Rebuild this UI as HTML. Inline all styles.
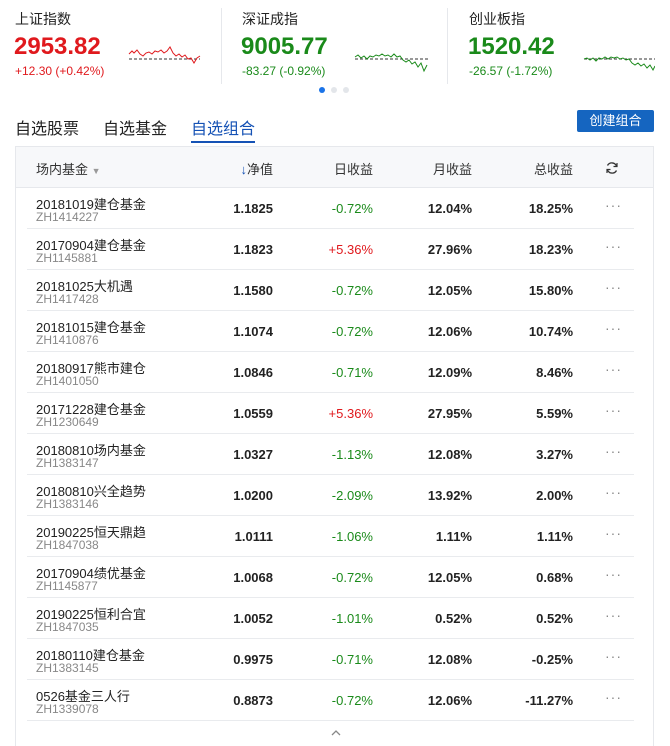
<!DOCTYPE html>
<html><head><meta charset="utf-8"><style>
*{margin:0;padding:0;box-sizing:border-box}
body{width:670px;height:734px;overflow:hidden;background:#fff;font-family:"Liberation Sans","Noto Sans CJK SC",sans-serif;color:#222;position:relative}
.a{position:absolute;white-space:nowrap}
.lbl{font-size:14px;color:#222}
.big{font-size:24px;font-weight:bold}
.chg{font-size:12px}
.red{color:#e0191d}.grn{color:#1a8a1a}
.sep{position:absolute;top:8px;width:1px;height:76px;background:#e6e8ec}
.tab{font-size:16px;top:115px}
.tbl{position:absolute;left:15px;top:146px;width:639px;height:600px;border:1px solid #e6e8ec;border-bottom:none}
.hd{position:absolute;left:0;top:0;width:637px;height:41px;background:#f7f8fa;border-bottom:1px solid #e6e8ec}
.h{position:absolute;top:12px;font-size:13px;color:#333}
.hr{position:absolute;top:12px;font-size:13px;color:#333;width:90px;text-align:right}
.row{position:absolute;left:11px;width:607px;height:41px;border-bottom:1px solid #e9ebee}
.nm{position:absolute;left:9px;top:6px;font-size:13px;color:#222}
.cd{position:absolute;left:9px;top:22px;font-size:12px;color:#888}
.n{position:absolute;top:13px;font-size:13px;font-weight:bold;text-align:right;width:90px}
.d{position:absolute;left:578px;top:9px;font-size:14px;color:#888;letter-spacing:1px}
</style></head><body>
<div class="a lbl" style="left:15px;top:9px">上证指数</div>
<div class="a big red" style="left:14px;top:33px">2953.82</div>
<div class="a chg red" style="left:15px;top:64px">+12.30 (+0.42%)</div>
<svg class="a" style="left:128px;top:40px" width="75" height="25"><line x1="1" y1="19" x2="72" y2="19" stroke="#333" stroke-dasharray="3,2" stroke-width="1"/><polyline fill="none" stroke="#e0191d" stroke-width="1" points="1,14 4,11 6,13 9,10 12,14 15,16 18,13 21,12 24,14 27,11 30,12 33,10 36,13 39,11 42,7 45,13 48,16 51,14 54,17 57,15 60,19 63,18 66,23 69,18 72,16"/></svg>
<div class="sep" style="left:221px"></div>
<div class="a lbl" style="left:242px;top:9px">深证成指</div>
<div class="a big grn" style="left:241px;top:33px">9005.77</div>
<div class="a chg grn" style="left:242px;top:64px">-83.27 (-0.92%)</div>
<svg class="a" style="left:354px;top:48px" width="76" height="28"><line x1="1" y1="11" x2="74" y2="11" stroke="#333" stroke-dasharray="3,2"/><polyline fill="none" stroke="#1a8a1a" stroke-width="1" points="1,9 4,7 7,10 10,8 13,11 16,8 19,9 22,7 25,8 28,6 31,8 34,7 37,9 40,6 43,9 46,8 49,12 52,14 55,12 58,16 61,14 64,19 67,15 70,23 73,17"/></svg>
<div class="sep" style="left:447px"></div>
<div class="a lbl" style="left:469px;top:9px">创业板指</div>
<div class="a big grn" style="left:468px;top:33px">1520.42</div>
<div class="a chg grn" style="left:469px;top:64px">-26.57 (-1.72%)</div>
<svg class="a" style="left:583px;top:52px" width="72" height="24"><line x1="1" y1="7" x2="72" y2="7" stroke="#333" stroke-dasharray="3,2"/><polyline fill="none" stroke="#1a8a1a" stroke-width="1" points="1,7 4,6 7,8 10,6 13,9 16,6 19,7 22,5 25,7 28,5 31,6 34,5 37,7 40,6 43,8 46,7 49,11 52,13 55,11 58,14 61,12 64,16 67,13 70,18 72,14"/></svg>
<div class="a" style="left:319px;top:87px;width:6px;height:6px;border-radius:3px;background:#1a73e8"></div>
<div class="a" style="left:331px;top:87px;width:6px;height:6px;border-radius:3px;background:#e3e6ea"></div>
<div class="a" style="left:343px;top:87px;width:6px;height:6px;border-radius:3px;background:#e3e6ea"></div>
<div class="a tab" style="left:15px">自选股票</div>
<div class="a tab" style="left:103px">自选基金</div>
<div class="a tab" style="left:191px;color:#1552b5">自选组合</div>
<div class="a" style="left:191px;top:141px;width:64px;height:2px;background:#1552b5"></div>
<div class="a" style="left:577px;top:110px;width:77px;height:22px;background:#1565c0;border-radius:2px;color:#fff;font-size:13px;text-align:center;line-height:22px">创建组合</div>
<div class="tbl">
<div class="hd">
<div class="h" style="left:20px">场内基金 <span style="color:#999;font-size:9px">▼</span></div>
<div class="hr" style="left:167px"><span style="color:#1552b5">↓</span>净值</div>
<div class="hr" style="left:267px">日收益</div>
<div class="hr" style="left:366px">月收益</div>
<div class="hr" style="left:467px">总收益</div>
<svg class="a" style="left:589px;top:14px" width="14" height="14" viewBox="0 0 14 14"><path d="M11.5 5A5 5 0 0 0 2.5 4.5M2.5 9A5 5 0 0 0 11.5 9.5" fill="none" stroke="#333" stroke-width="1.3"/><path d="M12 2v3.5h-3.5M2 12V8.5h3.5" fill="none" stroke="#333" stroke-width="1.2"/></svg>
</div>
<div id="rows"></div>
<svg class="a" style="left:315px;top:582px" width="10" height="8"><path d="M1 6L5 2 9 6" fill="none" stroke="#888" stroke-width="1.3"/></svg>
</div>
<script>
var d=[["20181019建仓基金","ZH1414227","1.1825","-0.72%","12.04%","18.25%"],
["20170904建仓基金","ZH1145881","1.1823","+5.36%","27.96%","18.23%"],
["20181025大机遇","ZH1417428","1.1580","-0.72%","12.05%","15.80%"],
["20181015建仓基金","ZH1410876","1.1074","-0.72%","12.06%","10.74%"],
["20180917熊市建仓","ZH1401050","1.0846","-0.71%","12.09%","8.46%"],
["20171228建仓基金","ZH1230649","1.0559","+5.36%","27.95%","5.59%"],
["20180810场内基金","ZH1383147","1.0327","-1.13%","12.08%","3.27%"],
["20180810兴全趋势","ZH1383146","1.0200","-2.09%","13.92%","2.00%"],
["20190225恒天鼎趋","ZH1847038","1.0111","-1.06%","1.11%","1.11%"],
["20170904绩优基金","ZH1145877","1.0068","-0.72%","12.05%","0.68%"],
["20190225恒利合宜","ZH1847035","1.0052","-1.01%","0.52%","0.52%"],
["20180110建仓基金","ZH1383145","0.9975","-0.71%","12.08%","-0.25%"],
["0526基金三人行","ZH1339078","0.8873","-0.72%","12.06%","-11.27%"]];
var h="";
d.forEach(function(r,i){
var c=r[3][0]=="+"?"#e0191d":"#1a8a1a";
h+='<div class="row" style="top:'+(41+i*41)+'px"><div class="nm">'+r[0]+'</div><div class="cd">'+r[1]+'</div>'+
'<div class="n" style="left:156px">'+r[2]+'</div><div class="n" style="left:256px;font-weight:normal;color:'+c+'">'+r[3]+'</div>'+
'<div class="n" style="left:355px">'+r[4]+'</div><div class="n" style="left:456px">'+r[5]+'</div><div class="d">···</div></div>';});
document.getElementById("rows").innerHTML=h;
</script>
</body></html>
